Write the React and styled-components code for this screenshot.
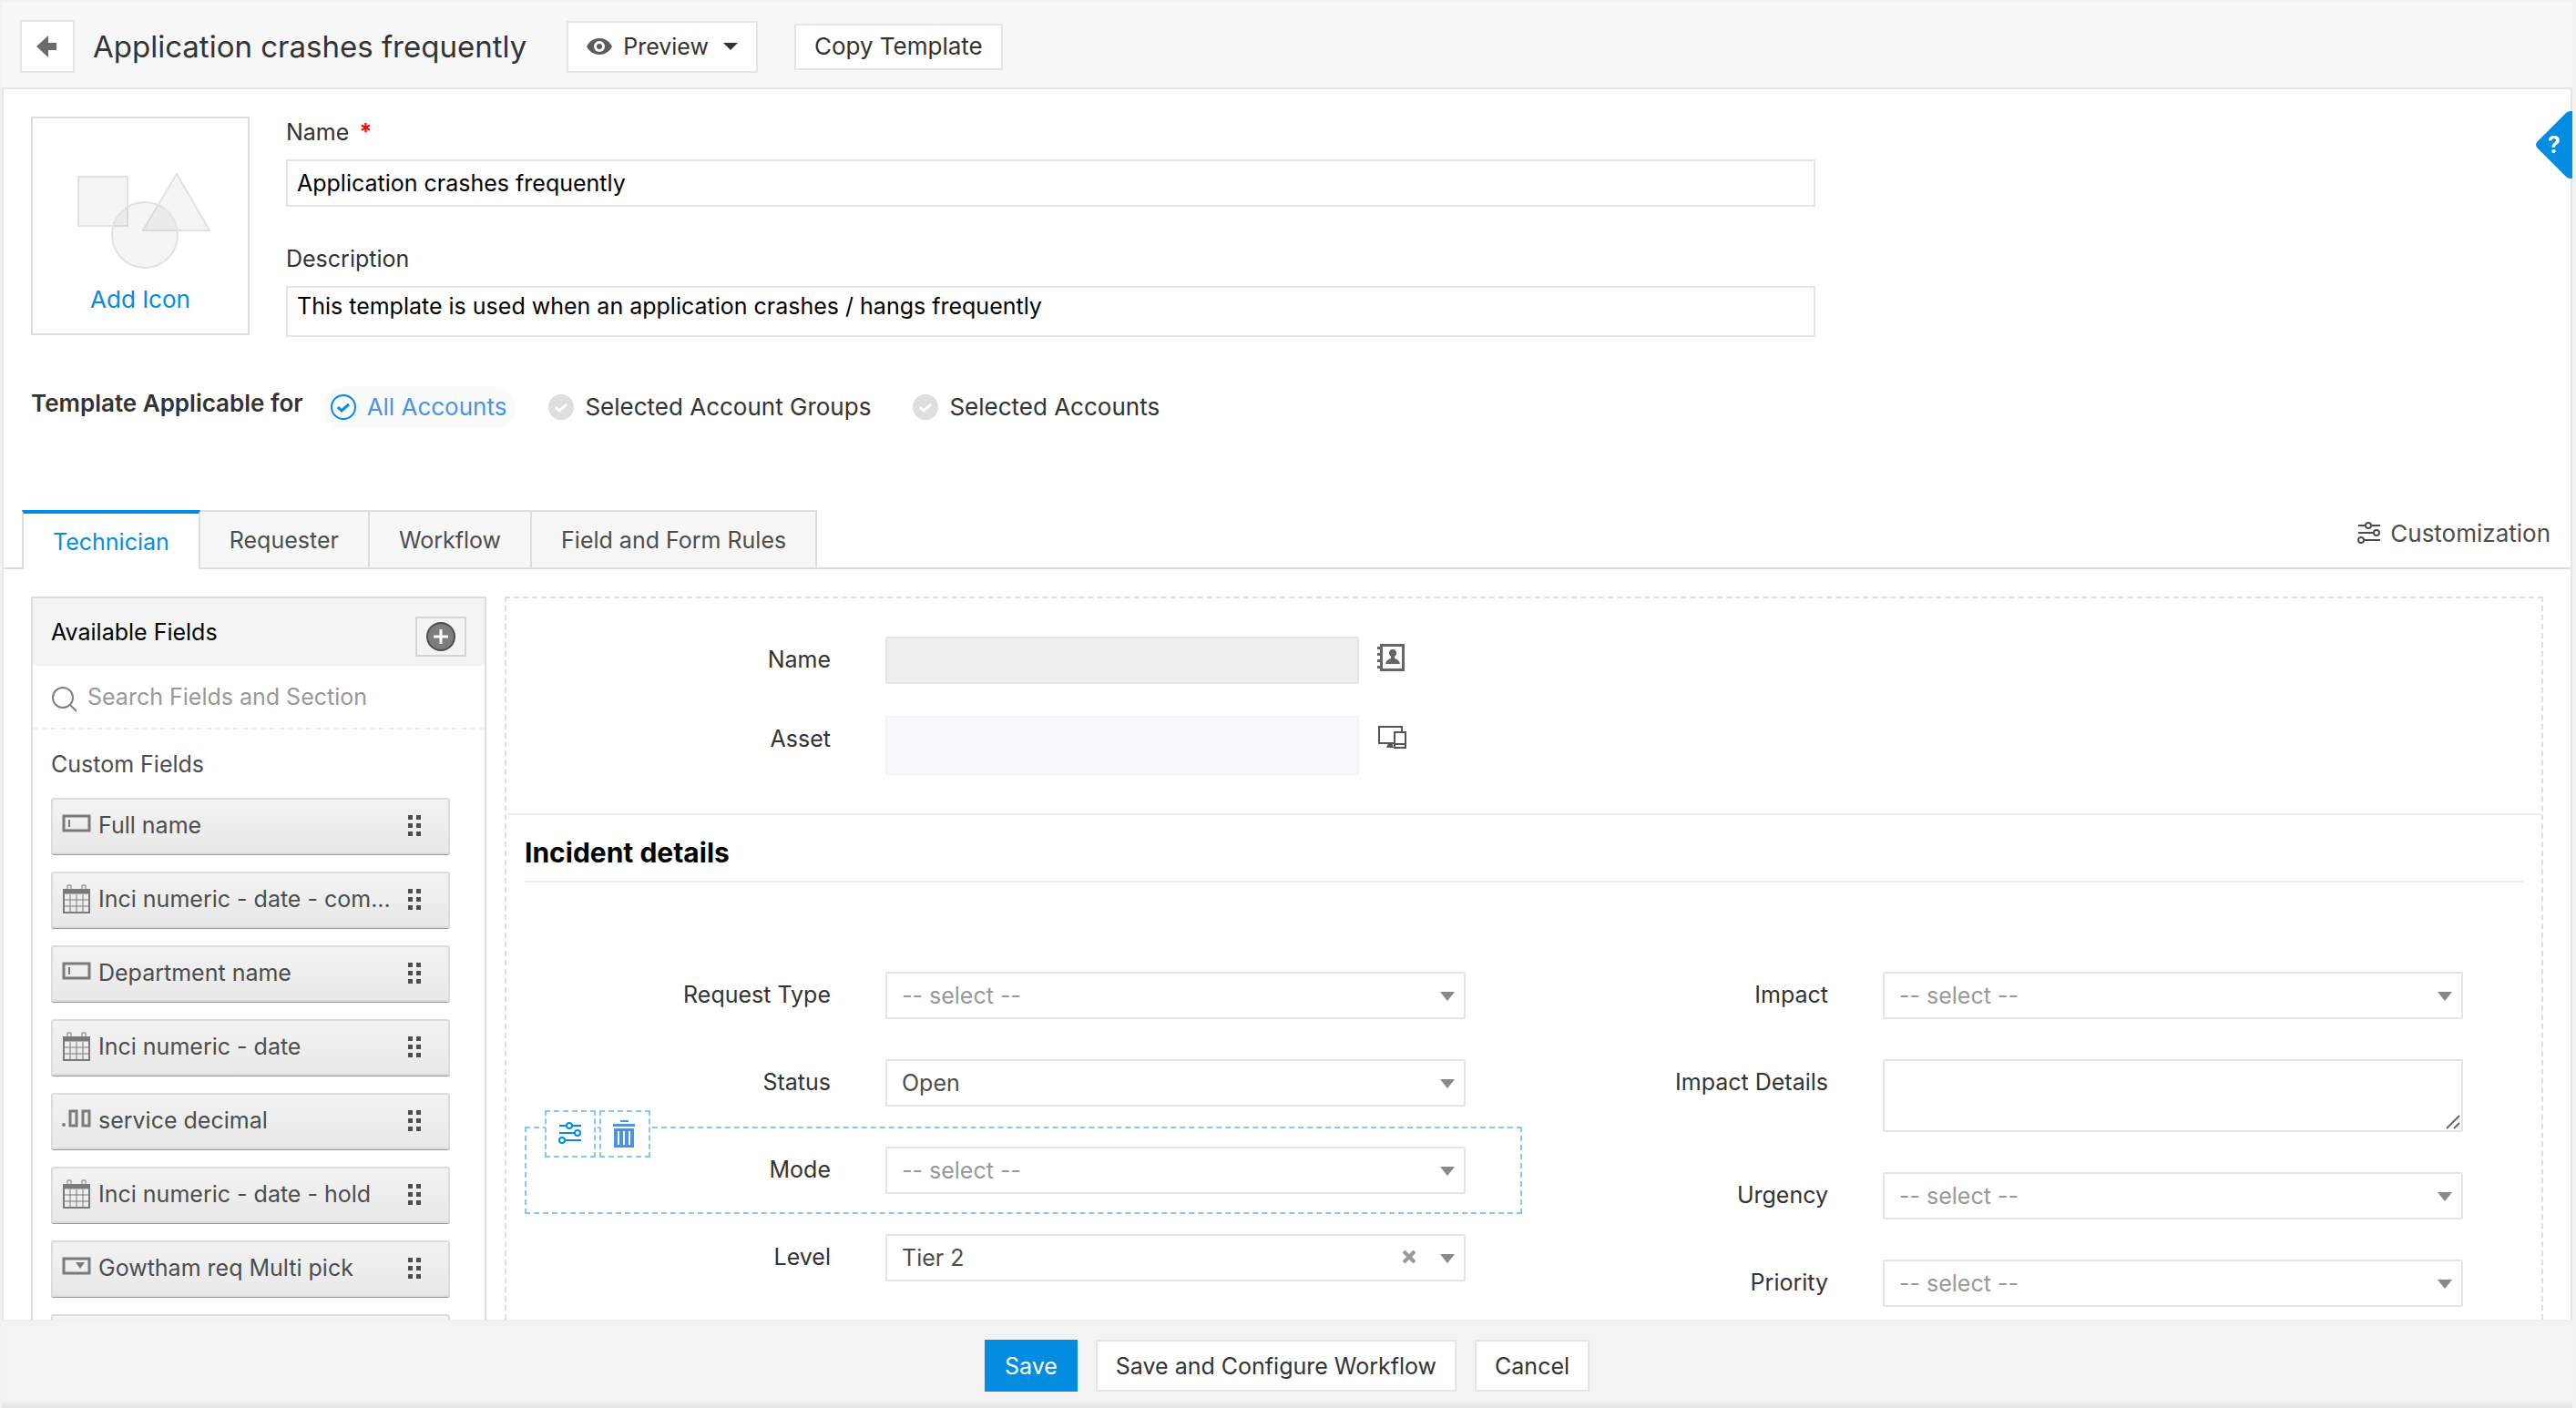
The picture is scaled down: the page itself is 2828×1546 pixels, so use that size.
import {useState} from 'react';
import styled, {createGlobalStyle, css} from 'styled-components';

const customFields = [
  {id: 1, name: 'Full name', type: 'text'},
  {id: 2, name: 'Inci numeric - date - com...', type: 'date'},
  {id: 3, name: 'Department name', type: 'text'},
  {id: 4, name: 'Inci numeric - date', type: 'date'},
  {id: 5, name: 'service decimal', type: 'decimal'},
  {id: 6, name: 'Inci numeric - date - hold', type: 'date'},
  {id: 7, name: 'Gowtham req Multi pick', type: 'pick'},
  {id: 8, name: '', type: 'text'},
];

const accountOptions = ['All Accounts', 'Selected Account Groups', 'Selected Accounts'];
const tabs = ['Technician', 'Requester', 'Workflow', 'Field and Form Rules'];

export default function App() {
  const [name, setName] = useState('Application crashes frequently');
  const [description, setDescription] = useState(
    'This template is used when an application crashes / hangs frequently'
  );
  const [account, setAccount] = useState(accountOptions[0]);
  const [tab, setTab] = useState(tabs[0]);

  return (
    <Page>
      <GlobalStyle />
      <Header>
        <BackButton type="button" aria-label="Back">
          <BackIcon />
        </BackButton>
        <Title>Application crashes frequently</Title>
        <PreviewButton type="button">
          <EyeIcon />
          Preview
          <Caret />
        </PreviewButton>
        <CopyButton type="button">Copy Template</CopyButton>
      </Header>
      <HelpButton type="button" aria-label="Help">
        <HelpShape />
        <HelpMark>?</HelpMark>
      </HelpButton>

      <Content>
        <TemplateInfo>
          <IconBox type="button">
            <ShapesIcon />
            Add Icon
          </IconBox>
          <InfoFields>
            <InfoLabel htmlFor="template-name">
              Name <Required>*</Required>
            </InfoLabel>
            <NameInput
              id="template-name"
              value={name}
              onChange={event => setName(event.target.value)}
            />
            <InfoLabel htmlFor="template-description">Description</InfoLabel>
            <DescriptionInput
              id="template-description"
              rows="1"
              value={description}
              onChange={event => setDescription(event.target.value)}
            />
          </InfoFields>
        </TemplateInfo>

        <AccountRow role="radiogroup" aria-labelledby="applicable-for">
          <AccountTitle id="applicable-for">Template Applicable for</AccountTitle>
          {accountOptions.map(option => (
            <AccountOption key={option} $active={option === account}>
              <AccountRadio
                type="radio"
                name="account"
                checked={option === account}
                onChange={() => setAccount(option)}
              />
              <CheckIcon active={option === account} />
              {option}
            </AccountOption>
          ))}
        </AccountRow>

        <TabBar>
          <TabList role="tablist">
            {tabs.map(item => (
              <Tab
                key={item}
                type="button"
                role="tab"
                aria-selected={item === tab}
                $active={item === tab}
                onClick={() => setTab(item)}
              >
                {item}
              </Tab>
            ))}
          </TabList>
          <CustomizationButton type="button">
            <SlidersIcon />
            Customization
          </CustomizationButton>
        </TabBar>

        <Builder>
          <Sidebar>
            <SidebarHeader>
              <SidebarTitle>Available Fields</SidebarTitle>
              <AddButton type="button" aria-label="Add field">
                <PlusIcon />
              </AddButton>
            </SidebarHeader>
            <SearchBox>
              <SearchIcon />
              <SearchInput
                type="text"
                aria-label="Search Fields and Section"
                placeholder="Search Fields and Section"
              />
            </SearchBox>
            <ListTitle>Custom Fields</ListTitle>
            <FieldList>
              {customFields.map(field => (
                <FieldItem key={field.id}>
                  <FieldIcon type={field.type} />
                  <FieldName>{field.name}</FieldName>
                  <DotsIcon />
                </FieldItem>
              ))}
            </FieldList>
          </Sidebar>

          <Canvas>
            <RequesterSection>
              <RequesterRow>
                <FormLabel htmlFor="requester-name">Name</FormLabel>
                <NameBox id="requester-name" disabled />
                <ContactIcon />
              </RequesterRow>
              <RequesterRow>
                <FormLabel htmlFor="requester-asset">Asset</FormLabel>
                <AssetBox id="requester-asset" disabled />
                <DevicesIcon />
              </RequesterRow>
            </RequesterSection>
            <Section>
              <SectionTitle>Incident details</SectionTitle>
              <FormGrid>
                <FormColumn>
                  <SelectRow id="request-type" label="Request Type" />
                  <SelectRow id="status" label="Status" value="Open" />
                  <SelectRow id="mode" label="Mode" selected />
                  <SelectRow id="level" label="Level" value="Tier 2" clearable />
                </FormColumn>
                <FormColumn>
                  <SelectRow id="impact" label="Impact" />
                  <FormRow>
                    <FormLabel htmlFor="impact-details">Impact Details</FormLabel>
                    <Control>
                      <DetailsInput id="impact-details" />
                      <ResizeMark />
                    </Control>
                  </FormRow>
                  <SelectRow id="urgency" label="Urgency" />
                  <SelectRow id="priority" label="Priority" />
                </FormColumn>
              </FormGrid>
            </Section>
          </Canvas>
        </Builder>
      </Content>

      <Footer>
        <SaveButton type="button">Save</SaveButton>
        <FooterButton type="button">Save and Configure Workflow</FooterButton>
        <FooterButton type="button">Cancel</FooterButton>
      </Footer>
    </Page>
  );
}

function SelectRow({id, label, value, selected, clearable}) {
  return (
    <FormRow $selected={selected}>
      {selected && (
        <RowTools>
          <RowTool type="button" aria-label="Edit field">
            <SlidersIcon />
          </RowTool>
          <RowTool type="button" aria-label="Delete field">
            <TrashIcon />
          </RowTool>
        </RowTools>
      )}
      <FormLabel htmlFor={id}>{label}</FormLabel>
      <Control>
        <Select id={id} $empty={!value} defaultValue={value || ''}>
          <option value="">-- select --</option>
          {value && <option>{value}</option>}
        </Select>
        {clearable && (
          <ClearButton type="button" aria-label="Clear">
            <ClearIcon />
          </ClearButton>
        )}
        <SelectArrow />
      </Control>
    </FormRow>
  );
}

function BackIcon() {
  return (
    <svg width="24" height="26" viewBox="0 0 24 26" fill="#6b6b6b">
      <path d="M0 13 13 1v8h9v8h-9v8z" />
    </svg>
  );
}

function EyeIcon() {
  return (
    <svg width="28" height="20" viewBox="0 0 28 20">
      <path d="M0 10C6-2 22-2 28 10 22 22 6 22 0 10z" fill="#5c5c5c" />
      <circle cx="14" cy="10" r="6" fill="#fff" />
      <circle cx="14" cy="10" r="3" fill="#5c5c5c" />
    </svg>
  );
}

function HelpShape() {
  return (
    <svg width="40" height="74" viewBox="0 0 40 74" fill="#048de0">
      <path d="M40 0h-2q-3 0-5 2L2 33q-4 4 0 8l31 31q2 2 5 2h2z" />
    </svg>
  );
}

function ShapesIcon() {
  return (
    <svg width="156" height="108" viewBox="-8 0 156 108" fill="#000" fillOpacity="0.04" stroke="#e2e2e2" strokeWidth="2">
      <rect x="2" y="6" width="54" height="54" />
      <path d="M110 3 146 65H73z" />
      <circle cx="75" cy="70" r="36" />
    </svg>
  );
}

function CheckIcon({active}) {
  return (
    <svg width="28" height="28" viewBox="0 0 28 28" fill="none">
      <circle
        cx="14"
        cy="14"
        r="13"
        fill={active ? 'none' : '#dcdfde'}
        stroke={active ? '#048de0' : '#dcdfde'}
        strokeWidth="2"
      />
      <path d="M8 14l4 4 8-7" stroke={active ? '#048de0' : '#fff'} strokeWidth="3" />
    </svg>
  );
}

function SlidersIcon() {
  return (
    <svg width="26" height="26" viewBox="0 0 26 26" fill="none" stroke="currentColor" strokeWidth="2">
      <path d="M1 4h8M15 4h10M1 12h17M8 20h17" />
      <circle cx="12" cy="4" r="3" />
      <circle cx="21" cy="12" r="3" />
      <circle cx="4" cy="20" r="3" />
    </svg>
  );
}

function TrashIcon() {
  return (
    <svg width="26" height="30" viewBox="0 0 26 30" fill="#4a94e8">
      <rect x="8" y="0" width="9" height="2" />
      <rect x="0" y="4" width="24" height="3" />
      <path d="M1 9h22v21H1zM5 12v15h2V12zM11 12v15h2V12zM17 12v15h2V12z" fillRule="evenodd" />
    </svg>
  );
}

function PlusIcon() {
  return (
    <svg width="32" height="32" viewBox="0 0 32 32">
      <circle cx="16" cy="16" r="15" fill="#7d7d7d" stroke="#4d4d4d" strokeWidth="2" />
      <path d="M8 16h16M16 8v16" stroke="#fff" strokeWidth="3" />
    </svg>
  );
}

function SearchIcon() {
  return (
    <svg width="28" height="34" viewBox="-1 -6 28 34" fill="none" stroke="#808080" strokeWidth="2">
      <circle cx="12" cy="12" r="11" />
      <path d="M20 20l7 7" />
    </svg>
  );
}

function FieldIcon({type}) {
  if (type === 'date') {
    return (
      <svg width="32" height="32" viewBox="-1 0 32 32" fill="none" stroke="#7a7a7a">
        <rect x="1" y="6" width="28" height="25" strokeWidth="2" />
        <path d="M1 8h28" strokeWidth="5" />
        <path d="M8 11v20M15 11v20M22 11v20M1 17h28M1 24h28" />
        <path d="M5 5V1h4v4M21 5V1h4v4" />
      </svg>
    );
  }
  if (type === 'decimal') {
    return (
      <svg width="32" height="24" viewBox="0 0 32 24" fill="none" stroke="#7a7a7a" strokeWidth="3">
        <rect x="9" y="2" width="7" height="16" />
        <rect x="23" y="2" width="7" height="16" />
        <circle cx="2" cy="17" r="2" fill="#7a7a7a" stroke="none" />
      </svg>
    );
  }
  return (
    <svg width="32" height="24" viewBox="0 0 32 24" fill="none" stroke="#7a7a7a" strokeWidth="3">
      <rect x="2" y="2" width="28" height="16" />
      {type === 'pick' ? (
        <path d="M15 6h10l-5 7z" fill="#7a7a7a" stroke="none" />
      ) : (
        <path d="M8 6v8" strokeWidth="2" />
      )}
    </svg>
  );
}

function DotsIcon() {
  return (
    <svg width="14" height="23" viewBox="0 0 14 23" fill="#4d4d4d">
      <path d="M0 0h5v5H0zM9 0h5v5H9zM0 9h5v5H0zM9 9h5v5H9zM0 18h5v5H0zM9 18h5v5H9z" />
    </svg>
  );
}

function ContactIcon() {
  return (
    <svg width="32" height="30" viewBox="0 0 32 30" fill="#666">
      <path d="M3 0h27v30H3zM6 3v24h21V3z" fillRule="evenodd" />
      <path d="M0 3h4v3H0zM0 10h4v3H0zM0 17h4v3H0zM0 24h4v3H0z" />
      <circle cx="17" cy="10" r="4" />
      <path d="M15 12h4v4q5 1 6 6H9q1-5 6-6z" />
    </svg>
  );
}

function DevicesIcon() {
  return (
    <svg width="32" height="28" viewBox="0 -2 32 28" fill="none" stroke="#555" strokeWidth="2">
      <path d="M19 20H2V2h25v5" />
      <rect x="19" y="8" width="12" height="17" />
      <path d="M19 21h12" />
      <path d="M12 20h4l2 5h-8z" fill="#555" stroke="none" />
    </svg>
  );
}

function ClearIcon() {
  return (
    <svg width="16" height="16" viewBox="0 0 16 16" stroke="#999" strokeWidth="4">
      <path d="M2 2l12 12M14 2 2 14" />
    </svg>
  );
}

function ResizeMark() {
  return (
    <ResizeSvg width="16" height="16" viewBox="0 0 16 16" stroke="#666" strokeWidth="2">
      <path d="M1 15 15 1M9 15l6-6" />
    </ResizeSvg>
  );
}

const GlobalStyle = createGlobalStyle`
  * {
    box-sizing: border-box;
  }
  body {
    background: #f7f7f7;
    color: #333;
    font-family: Inter, 'Liberation Sans', sans-serif;
    font-size: 25px;
    line-height: 34px;
    margin: 0;
  }
  button, input, select, textarea {
    color: inherit;
    font: inherit;
  }
  button {
    cursor: pointer;
  }
  svg {
    display: block;
    flex: none;
  }
`;

const Page = styled.div`
  border: solid #f2f2f2;
  border-width: 2px 4px 0 2px;
  display: flex;
  flex-direction: column;
  height: 100vh;
  position: relative;
`;

const Header = styled.header`
  align-items: center;
  background: #f7f7f7;
  border-bottom: 2px solid #e5e5e5;
  display: flex;
  padding: 20px 20px 16px;
`;

const boxButton = css`
  align-items: center;
  background: #fff;
  border: 2px solid #e5e5e5;
  display: flex;
  justify-content: center;
  padding: 0 20px;
`;

const BackButton = styled.button`
  ${boxButton}
  height: 58px;
  padding: 0;
  width: 60px;
`;

const Title = styled.h1`
  font-size: 33px;
  font-weight: 400;
  line-height: 44px;
  margin: 0 44px 0 20px;
`;

const PreviewButton = styled.button`
  ${boxButton}
  gap: 12px;
  height: 57px;
  margin-right: 40px;
`;

const Caret = styled.span`
  border: 8px solid transparent;
  border-bottom: 0;
  border-top-color: #333;
  margin-left: 4px;
`;

const CopyButton = styled.button`
  ${boxButton}
  font-size: 26px;
  height: 51px;
`;

const HelpButton = styled.button`
  background: none;
  border: 0;
  color: #fff;
  padding: 0;
  position: absolute;
  right: 0;
  top: 120px;
  z-index: 1;
`;

const HelpMark = styled.span`
  font-weight: 700;
  left: 13px;
  position: absolute;
  top: 20px;
`;

const Content = styled.main`
  background: #fff;
  border: solid #e5e5e5;
  border-width: 0 2px;
  flex: 1;
  min-height: 0;
  overflow: auto;
  scrollbar-width: none;
`;

const TemplateInfo = styled.section`
  display: flex;
  gap: 40px;
  padding: 30px 30px 0;
`;

const IconBox = styled.button`
  align-items: center;
  background: #fff;
  border: 2px solid #dedede;
  color: #048de0;
  display: flex;
  flex-direction: column;
  font-size: 26px;
  gap: 16px;
  height: 240px;
  justify-content: flex-end;
  padding: 0 0 20px;
  width: 240px;
`;

const InfoFields = styled.div`
  display: flex;
  flex: 0 1 1679px;
  flex-direction: column;
`;

const InfoLabel = styled.label`
  margin-bottom: 13px;
`;

const Required = styled.span`
  color: #f00;
  font-weight: 700;
  margin-left: 4px;
`;

const infoInput = css`
  background: #fff;
  border: 2px solid #e5e5e5;
  color: #000;
  padding: 0 10px;
`;

const NameInput = styled.input`
  ${infoInput}
  height: 52px;
  margin-bottom: 40px;
`;

const DescriptionInput = styled.textarea`
  ${infoInput}
  height: 56px;
  padding-top: 3px;
  resize: none;
`;

const AccountRow = styled.div`
  display: flex;
  font-size: 26px;
  margin: 54px 30px 0;
`;

const AccountTitle = styled.span`
  font-weight: 600;
  line-height: 38px;
  margin-right: 22px;
`;

const AccountOption = styled.label`
  align-items: center;
  background: ${props => (props.$active ? '#f8fafc' : 'none')};
  border-radius: 23px;
  color: ${props => (props.$active ? '#4a94e8' : '#333')};
  cursor: pointer;
  display: flex;
  gap: 12px;
  height: 46px;
  margin-right: 28px;
  padding: 0 10px 0 8px;
  position: relative;
`;

const AccountRadio = styled.input`
  height: 28px;
  margin: 0;
  opacity: 0;
  position: absolute;
  width: 28px;
`;

const TabBar = styled.div`
  align-items: flex-start;
  border-bottom: 2px solid #dedede;
  display: flex;
  justify-content: space-between;
  margin-top: 90px;
  padding: 0 22px 0 20px;
`;

const TabList = styled.div`
  display: flex;
`;

const Tab = styled.button`
  background: #f7f7f7;
  border: solid #dedede;
  border-width: 2px 2px 0 0;
  color: #4d4d4d;
  height: 63px;
  padding: 0 32px;
  ${props =>
    props.$active &&
    css`
      background: #fff;
      border-left-width: 2px;
      border-top: 4px solid #048de0;
      color: #048de0;
      height: 65px;
      margin-bottom: -2px;
    `}
`;

const CustomizationButton = styled.button`
  align-items: center;
  background: none;
  border: 0;
  color: #4d4d4d;
  display: flex;
  font-size: 26px;
  gap: 10px;
  height: 52px;
  padding: 0;
`;

const Builder = styled.div`
  align-items: flex-start;
  display: flex;
  gap: 20px;
  padding: 30px 30px 40px;
`;

const Sidebar = styled.aside`
  border: 2px solid #dedede;
  flex: 0 0 500px;
  padding-bottom: 20px;
`;

const SidebarHeader = styled.div`
  background: #f4f4f4;
  display: flex;
  height: 74px;
  justify-content: space-between;
  padding: 20px;
`;

const SidebarTitle = styled.h2`
  color: #000;
  font-size: 25px;
  font-weight: 400;
  margin: 0;
`;

const AddButton = styled.button`
  align-items: center;
  background: none;
  border: 2px solid #d5d5d5;
  display: flex;
  height: 44px;
  justify-content: center;
  padding: 0;
  width: 56px;
`;

const SearchBox = styled.div`
  align-items: center;
  border-bottom: 2px dashed #eee;
  display: flex;
  gap: 12px;
  height: 70px;
  padding: 0 20px;
`;

const SearchInput = styled.input`
  background: none;
  border: 0;
  flex: 1;
  min-width: 0;
  padding: 0;
  &::placeholder {
    color: #999;
    opacity: 1;
  }
`;

const ListTitle = styled.h3`
  color: #4d4d4d;
  font-size: 25px;
  font-weight: 400;
  margin: 21px 20px 20px;
`;

const FieldList = styled.ul`
  display: grid;
  gap: 19px;
  list-style: none;
  margin: 0;
  padding: 0 38px 0 20px;
`;

const FieldItem = styled.li`
  align-items: center;
  background: linear-gradient(#f3f3f3, #e8e8e8);
  border: 2px solid #dcdcdc;
  border-radius: 3px;
  box-shadow: 0 1px 0 #999;
  color: #4d4d4d;
  cursor: move;
  display: grid;
  gap: 8px;
  grid-template-columns: 32px 1fr 14px;
  height: 62px;
  padding: 0 30px 2px 10px;
`;

const FieldName = styled.span`
  overflow: hidden;
  text-overflow: ellipsis;
  white-space: nowrap;
`;

const Canvas = styled.section`
  border: 2px dashed #dedede;
  flex: 1;
  min-width: 0;
`;

const RequesterSection = styled.div`
  border-bottom: 2px solid #eee;
  display: grid;
  gap: 35px;
  padding: 42px 0;
`;

const RequesterRow = styled.div`
  display: flex;
  padding-left: 22px;
  svg {
    margin: 8px 0 0 20px;
  }
`;

const FormLabel = styled.label`
  flex: none;
  line-height: 50px;
  margin-right: 60px;
  text-align: right;
  width: 334px;
`;

const NameBox = styled.input`
  background: #eee;
  border: 2px solid #e5e5e5;
  border-radius: 2px;
  flex: 0 1 520px;
  height: 52px;
  min-width: 0;
`;

const AssetBox = styled.textarea`
  background: #f8f9fb;
  border: 2px solid #f3f4f4;
  flex: 0 1 520px;
  height: 65px;
  min-width: 0;
  resize: none;
`;

const Section = styled.div`
  padding: 0 20px 30px;
`;

const SectionTitle = styled.h2`
  border-bottom: 2px solid #eee;
  color: #000;
  font-size: 30px;
  font-weight: 700;
  line-height: 42px;
  margin: 0 0 76px;
  padding: 20px 0 10px;
`;

const FormGrid = styled.div`
  display: grid;
  grid-template-columns: 1fr 1fr;
  padding-right: 4px;
`;

const FormColumn = styled.div`
  display: flex;
  flex-direction: column;
`;

const FormRow = styled.div`
  border: 2px dashed ${props => (props.$selected ? '#84c7f2' : 'transparent')};
  display: flex;
  padding: 20px 60px 20px 0;
  position: relative;
`;

const RowTools = styled.div`
  display: flex;
  gap: 4px;
  left: 20px;
  position: absolute;
  top: -20px;
`;

const RowTool = styled.button`
  align-items: center;
  background: #fff;
  border: 2px dashed #84c7f2;
  color: #048de0;
  display: flex;
  height: 52px;
  justify-content: center;
  padding: 0;
  width: 56px;
`;

const Control = styled.div`
  flex: 1;
  min-width: 0;
  position: relative;
`;

const Select = styled.select`
  appearance: none;
  background: #fff;
  border: 2px solid #e5e5e5;
  border-radius: 2px;
  color: ${props => (props.$empty ? '#999' : '#4d4d4d')};
  display: block;
  height: 52px;
  padding: 0 50px 0 16px;
  width: 100%;
`;

const SelectArrow = styled.span`
  border: 8px solid transparent;
  border-bottom: 0;
  border-top: 10px solid #888;
  pointer-events: none;
  position: absolute;
  right: 12px;
  top: 22px;
`;

const ClearButton = styled.button`
  background: none;
  border: 0;
  padding: 0;
  position: absolute;
  right: 54px;
  top: 17px;
`;

const DetailsInput = styled.textarea`
  border: 2px solid #e5e5e5;
  border-radius: 2px;
  display: block;
  height: 80px;
  padding: 8px 16px;
  resize: none;
  width: 100%;
`;

const ResizeSvg = styled.svg`
  bottom: 3px;
  position: absolute;
  right: 3px;
`;

const Footer = styled.footer`
  background: linear-gradient(#f3f3f3 86px, #e4e4e4);
  border-top: 2px solid #f0f0f0;
  display: flex;
  gap: 20px;
  justify-content: center;
  padding: 20px 0 18px;
`;

const FooterButton = styled.button`
  ${boxButton}
  height: 57px;
`;

const SaveButton = styled(FooterButton)`
  background: #048de0;
  border-color: #048de0;
  color: #fff;
`;
